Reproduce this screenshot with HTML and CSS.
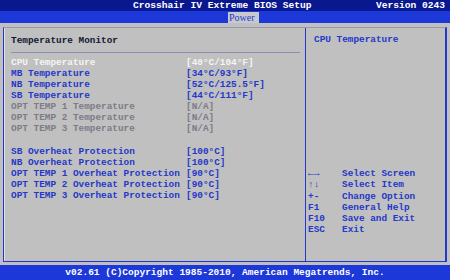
FILE: index.html
```html
<!DOCTYPE html>
<html>
<head>
<meta charset="utf-8">
<link rel="stylesheet" href="styles.css">
</head>
<body>
<div class="screen">
  <div class="title">
    <span class="title-text">Crosshair IV Extreme BIOS Setup</span>
    <span class="version">Version 0243</span>
  </div>
  <div class="tabs"><span class="tab">Power</span></div>
  <div class="main">
    <div class="frame">
      <div class="left">
        <div class="heading">Temperature Monitor</div>
        <div class="rule"></div>
        <div class="rows">
          <div class="row sel"><span class="lbl">CPU Temperature</span><span>[40°C/104°F]</span></div>
          <div class="row"><span class="lbl">MB Temperature</span><span>[34°C/93°F]</span></div>
          <div class="row"><span class="lbl">NB Temperature</span><span>[52°C/125.5°F]</span></div>
          <div class="row"><span class="lbl">SB Temperature</span><span>[44°C/111°F]</span></div>
          <div class="row dis"><span class="lbl">OPT TEMP 1 Temperature</span><span>[N/A]</span></div>
          <div class="row dis"><span class="lbl">OPT TEMP 2 Temperature</span><span>[N/A]</span></div>
          <div class="row dis"><span class="lbl">OPT TEMP 3 Temperature</span><span>[N/A]</span></div>
          <div class="row gap"></div>
          <div class="row"><span class="lbl">SB Overheat Protection</span><span>[100°C]</span></div>
          <div class="row"><span class="lbl">NB Overheat Protection</span><span>[100°C]</span></div>
          <div class="row"><span class="lbl">OPT TEMP 1 Overheat Protection</span><span>[90°C]</span></div>
          <div class="row"><span class="lbl">OPT TEMP 2 Overheat Protection</span><span>[90°C]</span></div>
          <div class="row"><span class="lbl">OPT TEMP 3 Overheat Protection</span><span>[90°C]</span></div>
        </div>
      </div>
      <div class="right">
        <div class="help-title">CPU Temperature</div>
        <div class="keys">
          <div class="key"><span class="k">←→</span><span>Select Screen</span></div>
          <div class="key"><span class="k">↑↓</span><span>Select Item</span></div>
          <div class="key"><span class="k">+-</span><span>Change Option</span></div>
          <div class="key"><span class="k">F1</span><span>General Help</span></div>
          <div class="key"><span class="k">F10</span><span>Save and Exit</span></div>
          <div class="key"><span class="k">ESC</span><span>Exit</span></div>
        </div>
      </div>
    </div>
  </div>
  <div class="footer">v02.61 (C)Copyright 1985-2010, American Megatrends, Inc.</div>
</div>
</body>
</html>
```
FILE: styles.css
```css
html, body {
  margin: 0;
  padding: 0;
  background: #c0c0c0;
}
.screen {
  width: 450px;
  height: 280px;
  display: flex;
  flex-direction: column;
  font-family: "Liberation Mono", "DejaVu Sans Mono", monospace;
  font-size: 9.4px;
  font-weight: bold;
  line-height: 11px;
  color: #2438c8;
  overflow: hidden;
}
.title {
  height: 11px;
  background: #0a1890;
  color: #ffffff;
  display: flex;
  align-items: center;
}
.title-text {
  margin-left: 133px;
  font-size: 9.6px;
}
.version {
  margin-left: auto;
  margin-right: 5px;
  font-size: 9.6px;
}
.tabs {
  height: 12px;
  background: #1c38d8;
  display: flex;
  align-items: flex-end;
}
.tab {
  margin-left: 228px;
  width: 30px;
  height: 11px;
  background: #c8c8d0;
  color: #2438c8;
  font-weight: normal;
  font-family: "Liberation Serif", serif;
  font-size: 10px;
  line-height: 11px;
  padding-left: 1px;
}
.main {
  flex: 1;
  padding: 4px 3px 3px 3px;
  display: flex;
}
.frame {
  flex: 1;
  display: flex;
  border-left: 1px solid #2438c8;
  border-right: 2px solid #2438c8;
  border-bottom: 1px solid #2438c8;
  border-top: 1px solid #9898a8;
  box-shadow: inset 1px 0 0 #e0e0e8;
}
.left {
  width: 302px;
  border-right: 1px solid #2438c8;
  padding: 7px 0 0 7px;
  box-sizing: border-box;
}
.heading {
  color: #101830;
  height: 11px;
}
.rule {
  width: 289px;
  height: 1px;
  background: #8890b0;
  margin: 6px 0 4px 0;
}
.rows {
  display: flex;
  flex-direction: column;
}
.row {
  display: flex;
  height: 11px;
}
.row.gap {
  height: 12px;
}
.lbl {
  width: 175px;
  white-space: pre;
}
.row.sel {
  color: #f4f4f4;
}
.row.dis {
  color: #7c7c88;
}
.right {
  flex: 1;
  display: flex;
  flex-direction: column;
  padding: 6px 0 0 8px;
}
.help-title {
  height: 11px;
}
.keys {
  margin-top: 123px;
  margin-left: -6px;
  display: flex;
  flex-direction: column;
}
.key {
  display: flex;
  height: 11.3px;
}
.k {
  width: 34px;
}
.footer {
  height: 15px;
  background: #1c38d8;
  color: #ffffff;
  text-align: center;
  line-height: 15px;
  font-size: 9.5px;
}
```
